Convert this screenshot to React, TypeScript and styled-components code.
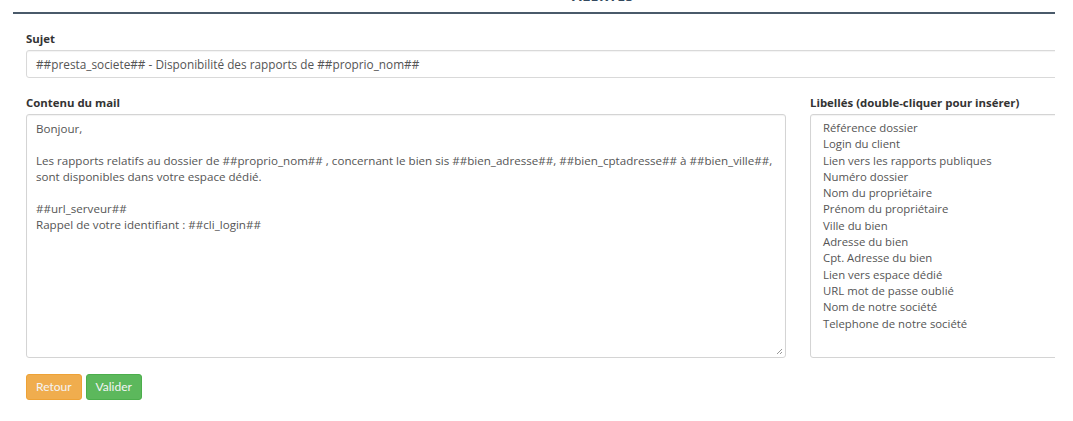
import React from "react";
import styled, { createGlobalStyle } from "styled-components";

const GlobalStyle = createGlobalStyle`
  html, body { margin: 0; padding: 0; background: #ffffff; }
  body { font-family: "Open Sans", "DejaVu Sans", sans-serif; color: #555555; overflow: hidden; }
  * { box-sizing: border-box; }
`;

const Page = styled.div`
  width: 1073px;
  height: 421px;
  overflow: hidden;
`;

const Header = styled.div`
  margin: -14px 18px 0 13px;
  height: 28px;
  border-bottom: 2px solid #4a5a6a;
  padding-left: 559px;
  font-size: 14px;
  font-weight: 700;
  line-height: 20px;
  color: #34495e;
  letter-spacing: 0.5px;
`;

const Form = styled.div`
  margin-left: 26px;
  width: 1029px;
  overflow: hidden;
  padding-top: 18px;
`;

const Label = styled.div`
  font-size: 11.4px;
  font-weight: 700;
  color: #333333;
  line-height: 14px;
  margin-bottom: 4px;
`;

const Field = styled.div`
  margin-bottom: 18px;
`;

const TextInput = styled.div`
  width: 1060px;
  height: 28px;
  border: 1px solid #d9d9d9;
  border-radius: 3px;
  padding: 0 9px;
  font-size: 11.8px;
  line-height: 26px;
  color: #555555;
  box-shadow: inset 0 1px 1px rgba(0, 0, 0, 0.05);
`;

const Columns = styled.div`
  display: flex;
  gap: 24px;
`;

const MailColumn = styled.div`
  width: 760px;
  flex: none;
`;

const SideColumn = styled.div`
  width: 260px;
  flex: none;
`;

const Box = styled.div`
  position: relative;
  height: 244px;
  border: 1px solid #d4d4d4;
  border-radius: 3px;
  box-shadow: inset 0 1px 1px rgba(0, 0, 0, 0.05);
`;

const MailBox = styled(Box)`
  padding: 6px 9px;
  font-size: 11.6px;
  line-height: 16px;
  color: #555555;
  white-space: pre-wrap;
`;

const ListBox = styled(Box)`
  width: 300px;
  padding: 5px 12px;
`;

const Option = styled.div`
  font-size: 11.35px;
  line-height: 16.3px;
  color: #555555;
  white-space: nowrap;
`;

const Grip = styled.svg`
  position: absolute;
  right: 2px;
  bottom: 2px;
`;

const Actions = styled.div`
  display: flex;
  gap: 4px;
  margin-top: 16px;
`;

const Button = styled.button<{ $tone: "warn" | "ok" }>`
  height: 26px;
  padding: 0 9px;
  border: 1px solid ${(p) => (p.$tone === "warn" ? "#eea236" : "#4cae4c")};
  background: ${(p) => (p.$tone === "warn" ? "#f0ad4e" : "#5cb85c")};
  color: #f4f4f4;
  border-radius: 3px;
  font-family: Lato, "Open Sans", sans-serif;
  font-size: 12px;
  line-height: 24px;
`;

const mailText = `Bonjour,

Les rapports relatifs au dossier de ##proprio_nom## , concernant le bien sis ##bien_adresse##, ##bien_cptadresse## à ##bien_ville##,
sont disponibles dans votre espace dédié.

##url_serveur##
Rappel de votre identifiant : ##cli_login##`;

const labels = [
  "Référence dossier",
  "Login du client",
  "Lien vers les rapports publiques",
  "Numéro dossier",
  "Nom du propriétaire",
  "Prénom du propriétaire",
  "Ville du bien",
  "Adresse du bien",
  "Cpt. Adresse du bien",
  "Lien vers espace dédié",
  "URL mot de passe oublié",
  "Nom de notre société",
  "Telephone de notre société",
];

export default function App() {
  return (
    <Page>
      <GlobalStyle />
      <Header>ALERTES</Header>
      <Form>
        <Field>
          <Label>Sujet</Label>
          <TextInput>##presta_societe## - Disponibilité des rapports de ##proprio_nom##</TextInput>
        </Field>
        <Columns>
          <MailColumn>
            <Label>Contenu du mail</Label>
            <MailBox>
              {mailText}
              <Grip width="7" height="7" viewBox="0 0 7 7">
                <path d="M6 1 L1 6 M6 4 L4 6" stroke="#999" strokeWidth="1" />
              </Grip>
            </MailBox>
          </MailColumn>
          <SideColumn>
            <Label>Libellés (double-cliquer pour insérer)</Label>
            <ListBox>
              {labels.map((l) => (
                <Option key={l}>{l}</Option>
              ))}
            </ListBox>
          </SideColumn>
        </Columns>
        <Actions>
          <Button $tone="warn">Retour</Button>
          <Button $tone="ok">Valider</Button>
        </Actions>
      </Form>
    </Page>
  );
}
